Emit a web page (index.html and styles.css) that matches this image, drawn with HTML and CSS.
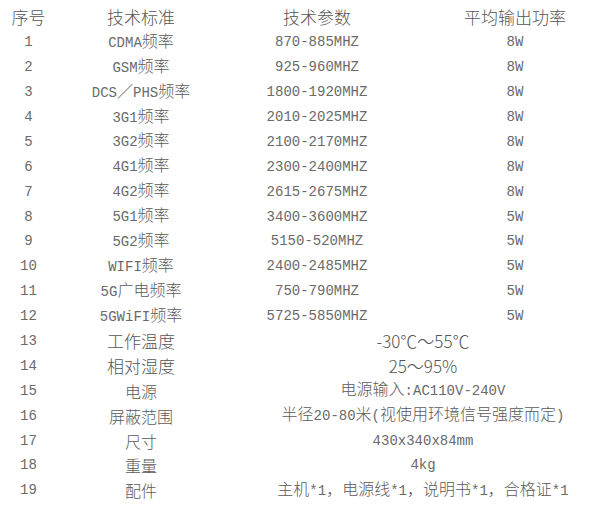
FILE: index.html
```html
<!DOCTYPE html>
<html lang="zh-CN">
<head>
<meta charset="utf-8">
<title>技术参数</title>
<link rel="stylesheet" href="styles.css">
</head>
<body>
<div class="wrap">
<table class="spec">
  <colgroup>
    <col class="c1"><col class="c2"><col class="c3"><col class="c4">
  </colgroup>
  <thead>
    <tr><th>序号</th><th>技术标准</th><th>技术参数</th><th>平均输出功率</th></tr>
  </thead>
  <tbody>
    <tr><td>1</td><td>CDMA<span class="zh">频率</span></td><td>870-885MHZ</td><td>8W</td></tr>
    <tr><td>2</td><td>GSM<span class="zh">频率</span></td><td>925-960MHZ</td><td>8W</td></tr>
    <tr><td>3</td><td>DCS<span class="zh">／</span>PHS<span class="zh">频率</span></td><td>1800-1920MHZ</td><td>8W</td></tr>
    <tr><td>4</td><td>3G1<span class="zh">频率</span></td><td>2010-2025MHZ</td><td>8W</td></tr>
    <tr><td>5</td><td>3G2<span class="zh">频率</span></td><td>2100-2170MHZ</td><td>8W</td></tr>
    <tr><td>6</td><td>4G1<span class="zh">频率</span></td><td>2300-2400MHZ</td><td>8W</td></tr>
    <tr><td>7</td><td>4G2<span class="zh">频率</span></td><td>2615-2675MHZ</td><td>8W</td></tr>
    <tr><td>8</td><td>5G1<span class="zh">频率</span></td><td>3400-3600MHZ</td><td>5W</td></tr>
    <tr><td>9</td><td>5G2<span class="zh">频率</span></td><td>5150-520MHZ</td><td>5W</td></tr>
    <tr><td>10</td><td>WIFI<span class="zh">频率</span></td><td>2400-2485MHZ</td><td>5W</td></tr>
    <tr><td>11</td><td>5G<span class="zh">广电频率</span></td><td>750-790MHZ</td><td>5W</td></tr>
    <tr><td>12</td><td>5GWiFI<span class="zh">频率</span></td><td>5725-5850MHZ</td><td>5W</td></tr>
    <tr><td>13</td><td class="lg">工作温度</td><td class="lg" colspan="2">-30℃～55℃</td></tr>
    <tr><td>14</td><td class="lg">相对湿度</td><td class="lg" colspan="2">25～95%</td></tr>
    <tr><td>15</td><td class="zh">电源</td><td colspan="2"><span class="zh">电源输入</span>:AC110V-240V</td></tr>
    <tr><td>16</td><td class="zh">屏蔽范围</td><td colspan="2"><span class="zh">半径</span>20-80<span class="zh">米</span>(<span class="zh">视使用环境信号强度而定</span>)</td></tr>
    <tr><td>17</td><td class="zh">尺寸</td><td colspan="2">430x340x84mm</td></tr>
    <tr><td>18</td><td class="zh">重量</td><td colspan="2">4kg</td></tr>
    <tr><td>19</td><td class="zh">配件</td><td colspan="2"><span class="zh">主机</span>*1<span class="zh">，电源线</span>*1<span class="zh">，说明书</span>*1<span class="zh">，合格证</span>*1</td></tr>
  </tbody>
</table>
</div>
</body>
</html>
```

FILE: styles.css
```css
html, body {
  margin: 0;
  padding: 0;
  background: #ffffff;
  overflow: hidden;
}

.wrap {
  width: 600px;
  overflow: hidden;
  padding-top: 5px;
}

.spec {
  border-collapse: collapse;
  table-layout: fixed;
  width: 621px;
}

.spec .c1 { width: 57px; }
.spec .c2 { width: 168px; }
.spec .c3 { width: 184px; }
.spec .c4 { width: 212px; }

.spec th,
.spec td {
  padding: 0;
  height: 24.9px;
  text-align: center;
  vertical-align: middle;
  white-space: nowrap;
  color: #6a6a6a;
  font-family: "Liberation Mono", "Noto Sans CJK SC", monospace;
  font-size: 14px;
  line-height: 20px;
}

.spec th {
  font-family: "Noto Sans CJK SC", sans-serif;
  font-weight: 300;
  font-size: 17px;
  color: #555555;
}

.spec .zh {
  font-family: "Noto Sans CJK SC", sans-serif;
  font-size: 16px;
  font-weight: 300;
  line-height: 1;
  color: #5a5a5a;
}

.spec td.lg {
  font-family: "Noto Sans CJK SC", sans-serif;
  font-weight: 300;
  font-size: 17px;
  color: #555555;
}
```
